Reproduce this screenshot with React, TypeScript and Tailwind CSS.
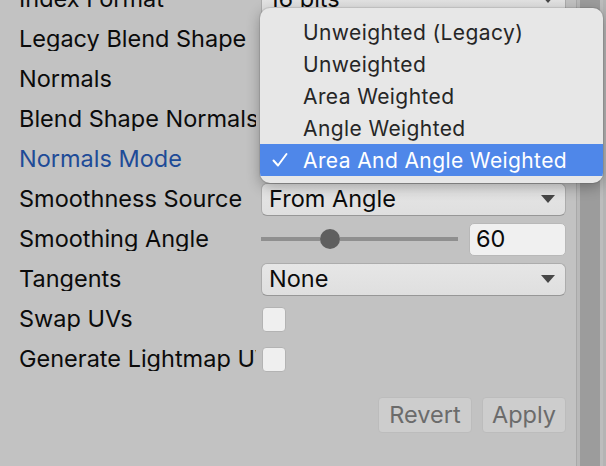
import React from 'react'

const menuItems = [
  'Unweighted (Legacy)',
  'Unweighted',
  'Area Weighted',
  'Angle Weighted',
  'Area And Angle Weighted',
]

function Arrow() {
  return (
    <svg width="14" height="8" viewBox="0 0 14 8">
      <path d="M0 0 H14 L7 8 Z" fill="#474747" />
    </svg>
  )
}

function Dropdown({ value }: { value: string }) {
  return (
    <div className="flex-1 h-[33px] flex items-center justify-between rounded-[6px] border border-[#acacac] border-b-[#979797] bg-gradient-to-b from-[#e6e6e6] to-[#dfdfdf] pl-[7px] pr-[10px]">
      <span className="text-[23.5px] leading-none text-[#0b0b0b]">{value}</span>
      <Arrow />
    </div>
  )
}

function Checkbox() {
  return <div className="ml-[1px] w-[24px] h-[25px] rounded-[4px] border border-[#b3b3b3] bg-[#efefef]" />
}

function Row({ label, blue, children }: { label: string; blue?: boolean; children?: React.ReactNode }) {
  return (
    <div className="flex h-[40px] items-center shrink-0">
      <div
        className={`w-[237px] mr-[5px] shrink-0 overflow-hidden whitespace-nowrap text-[23.5px] leading-none ${
          blue ? 'text-[#1e4b97]' : 'text-[#0b0b0b]'
        }`}
      >
        {label}
      </div>
      <div className="flex flex-1 items-center">{children}</div>
    </div>
  )
}

export default function App() {
  return (
    <div className="relative flex w-[606px] h-[466px] overflow-hidden bg-[#c2c2c2] font-['Inter',sans-serif]">
      <div className="flex flex-1 flex-col pl-[19px] pr-[10px]">
        <div className="mt-[-21px] flex flex-col">
          <Row label="Index Format">
            <Dropdown value="16 bits" />
          </Row>
          <Row label="Legacy Blend Shape" />
          <Row label="Normals" />
          <Row label="Blend Shape Normals" />
          <Row label="Normals Mode" blue />
          <Row label="Smoothness Source">
            <Dropdown value="From Angle" />
          </Row>
          <Row label="Smoothing Angle">
            <div className="flex flex-1 items-center pr-[11px]">
              <div className="h-[4px] w-[59px] bg-[#8f8f8f]" />
              <div className="w-[20px] h-[20px] rounded-full bg-[#5f5f5f]" />
              <div className="h-[4px] flex-1 bg-[#8f8f8f]" />
            </div>
            <div className="w-[97px] h-[33px] flex items-center rounded-[5px] border border-[#b8b8b8] bg-[#f0f0f0] pl-[6px] text-[23.5px] leading-none text-[#0b0b0b]">
              60
            </div>
          </Row>
          <Row label="Tangents">
            <Dropdown value="None" />
          </Row>
          <Row label="Swap UVs">
            <Checkbox />
          </Row>
          <Row label="Generate Lightmap UVs">
            <Checkbox />
          </Row>
        </div>
        <div className="mt-[18px] flex justify-end gap-[10px]">
          <button className="w-[94px] h-[36px] rounded-[4px] border border-[#bcbcbc] bg-[#cdcdcd] text-[23.5px] leading-none text-[#6b6b6b]">
            Revert
          </button>
          <button className="w-[84px] h-[36px] rounded-[4px] border border-[#bcbcbc] bg-[#cdcdcd] text-[23.5px] leading-none text-[#6b6b6b]">
            Apply
          </button>
        </div>
      </div>

      {/* scrollbar */}
      <div className="flex w-[30px] shrink-0">
        <div className="w-[1px] bg-[#a9a9a9]" />
        <div className="w-[3px] bg-[#b9b9b9]" />
        <div className="w-[20px] bg-[#9c9c9c]" />
        <div className="w-[3px] bg-[#bdbdbd]" />
        <div className="flex-1 bg-[#b4b4b4]" />
      </div>

      {/* popup menu */}
      <div className="absolute left-[260px] top-[8px] w-[343px] h-[175px] rounded-[10px] bg-[#e7e7e7] pt-[8px] pb-[7px] shadow-[0_4px_14px_rgba(0,0,0,0.3),0_0_0_1px_rgba(0,0,0,0.08)] overflow-hidden">
        {menuItems.map((item, i) => {
          const selected = i === menuItems.length - 1
          return (
            <div
              key={item}
              className={`relative flex h-[32px] items-center pl-[43px] text-[21px] leading-none tracking-[0.4px] ${
                selected ? 'bg-[#4f87e9] text-white' : 'text-[#262626]'
              }`}
            >
              {selected && (
                <svg className="absolute left-[12px] top-[8px]" width="16" height="16" viewBox="0 0 16 16">
                  <path d="M1.5 8.5 L6 13.5 L14.5 2" fill="none" stroke="white" strokeWidth="2" strokeLinecap="round" strokeLinejoin="round" />
                </svg>
              )}
              {item}
            </div>
          )
        })}
      </div>
    </div>
  )
}
